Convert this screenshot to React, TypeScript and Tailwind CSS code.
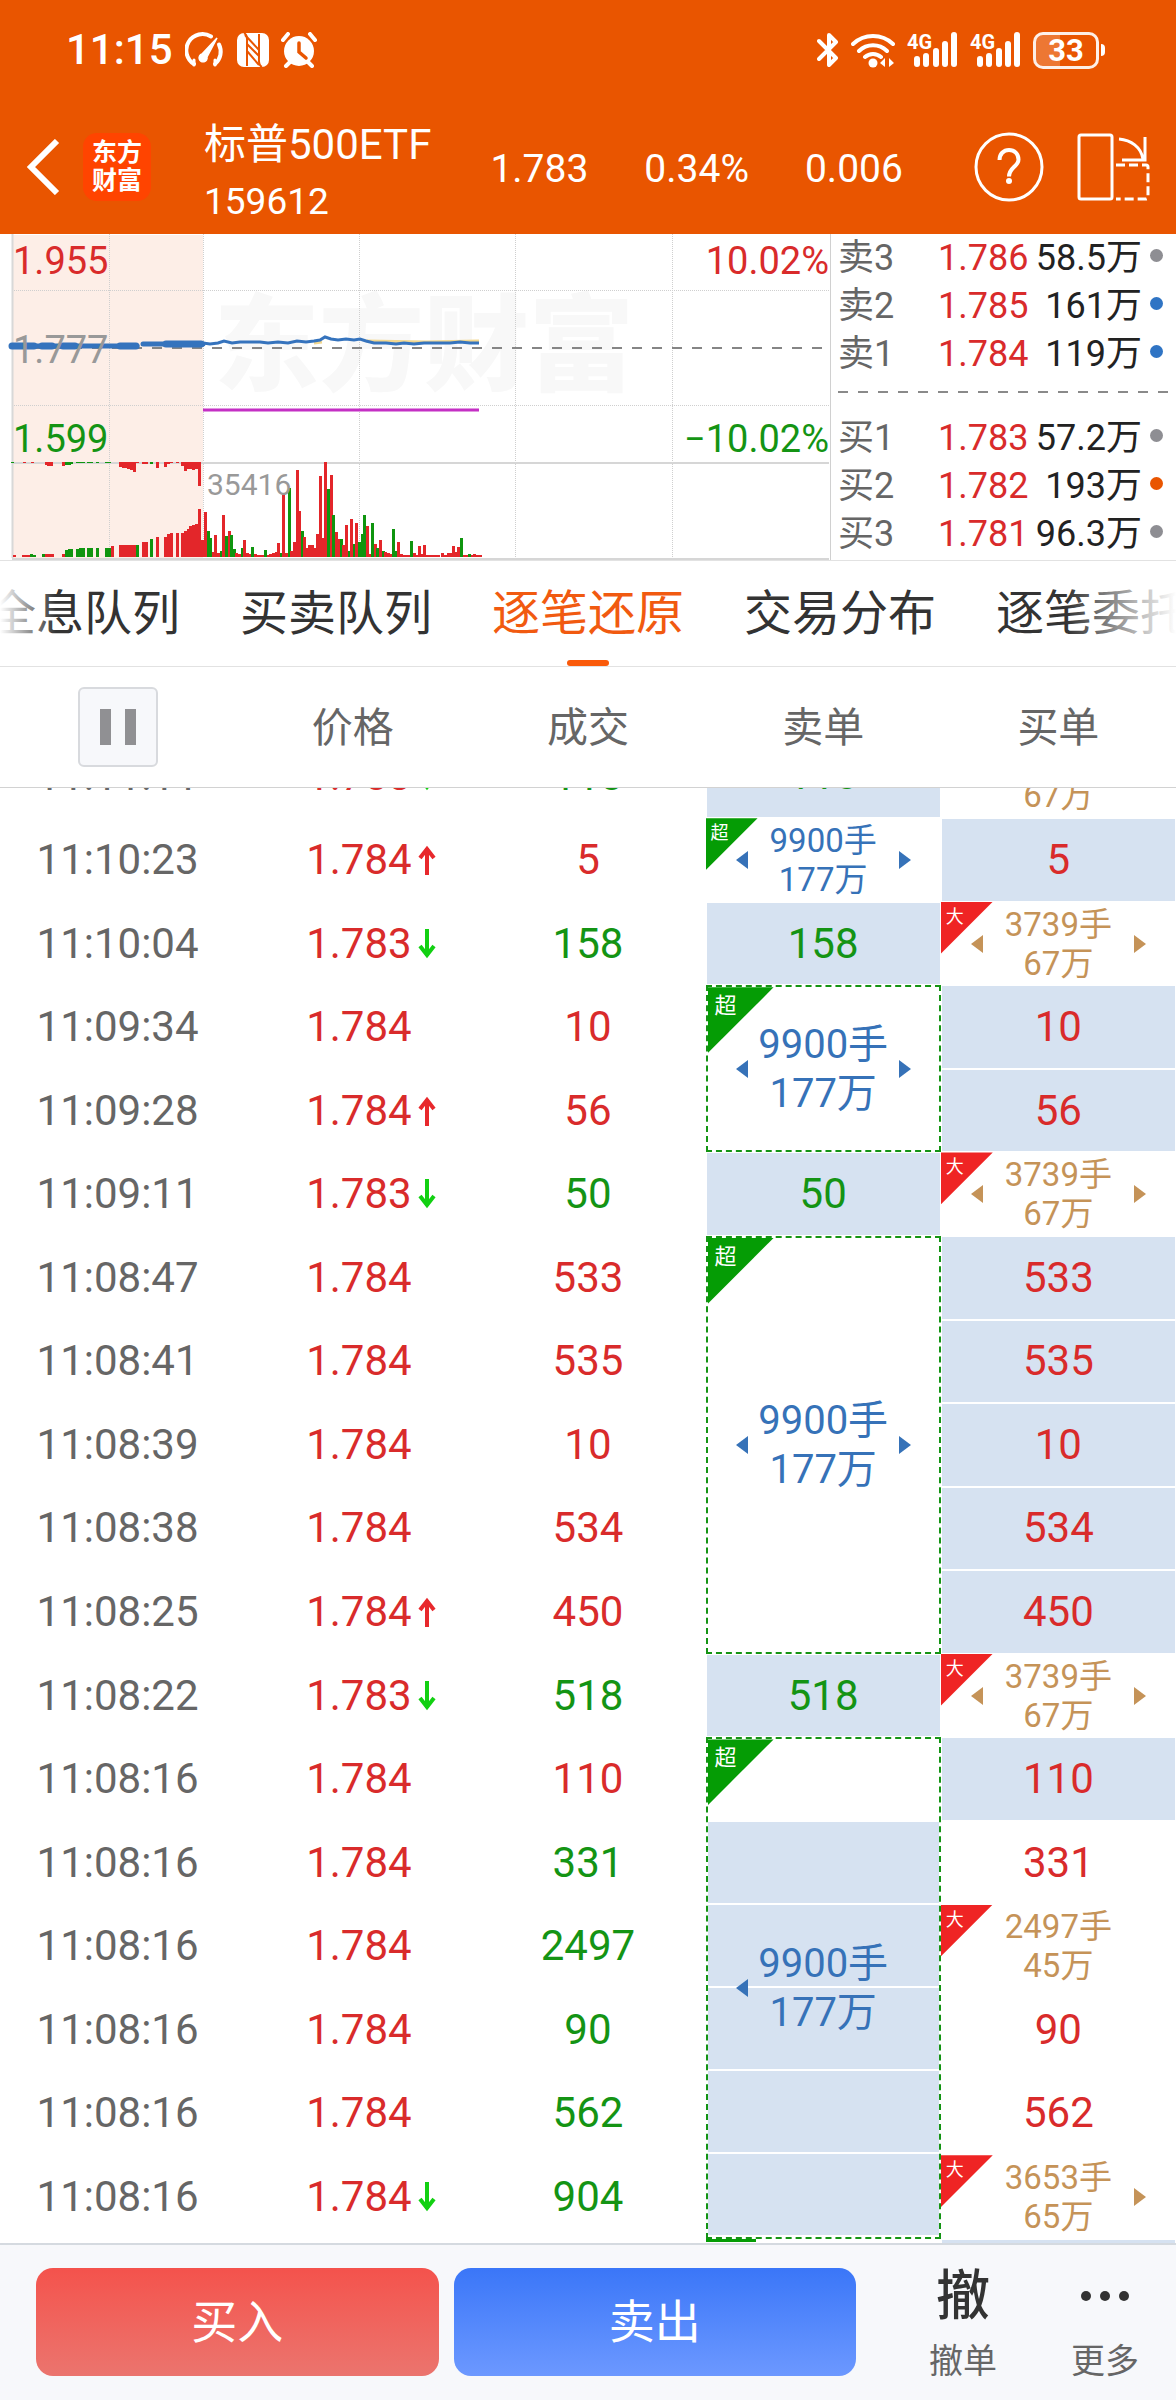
import clsx from "clsx";

type Side = "up" | "down";

type Order = {
  lots: string;
  amount: string;
  span?: number;
  left?: boolean;
  right?: boolean;
  // number of leading rows in the group that stay white
  plainRows?: number;
};

type Tick = {
  time: string;
  price: string;
  move?: Side;
  volume: string;
  side: Side;
  sell?: Order | "match";
  buy: Order | "match" | "plain";
};

const bigSell = (span: number): Order => ({
  lots: "9900手",
  amount: "177万",
  span,
  left: true,
  right: true,
});

const bigBuy: Order = { lots: "3739手", amount: "67万", left: true, right: true };

const ticks: Tick[] = [
  { time: "11:10:23", price: "1.784", move: "up", volume: "5", side: "up", sell: bigSell(1), buy: "match" },
  { time: "11:10:04", price: "1.783", move: "down", volume: "158", side: "down", sell: "match", buy: bigBuy },
  { time: "11:09:34", price: "1.784", volume: "10", side: "up", sell: bigSell(2), buy: "match" },
  { time: "11:09:28", price: "1.784", move: "up", volume: "56", side: "up", buy: "match" },
  { time: "11:09:11", price: "1.783", move: "down", volume: "50", side: "down", sell: "match", buy: bigBuy },
  { time: "11:08:47", price: "1.784", volume: "533", side: "up", sell: bigSell(5), buy: "match" },
  { time: "11:08:41", price: "1.784", volume: "535", side: "up", buy: "match" },
  { time: "11:08:39", price: "1.784", volume: "10", side: "up", buy: "match" },
  { time: "11:08:38", price: "1.784", volume: "534", side: "up", buy: "match" },
  { time: "11:08:25", price: "1.784", move: "up", volume: "450", side: "up", buy: "match" },
  { time: "11:08:22", price: "1.783", move: "down", volume: "518", side: "down", sell: "match", buy: bigBuy },
  {
    time: "11:08:16",
    price: "1.784",
    volume: "110",
    side: "up",
    sell: { lots: "9900手", amount: "177万", span: 6, left: true, plainRows: 1 },
    buy: "match",
  },
  { time: "11:08:16", price: "1.784", volume: "331", side: "down", buy: "plain" },
  { time: "11:08:16", price: "1.784", volume: "2497", side: "down", buy: { lots: "2497手", amount: "45万" } },
  { time: "11:08:16", price: "1.784", volume: "90", side: "down", buy: "plain" },
  { time: "11:08:16", price: "1.784", volume: "562", side: "down", buy: "plain" },
  {
    time: "11:08:16",
    price: "1.784",
    move: "down",
    volume: "904",
    side: "down",
    buy: { lots: "3653手", amount: "65万", right: true },
  },
];

const asks = [
  { label: "卖3", price: "1.786", qty: "58.5万", dot: "bg-[#8e8e93]" },
  { label: "卖2", price: "1.785", qty: "161万", dot: "bg-[#2f74c4]" },
  { label: "卖1", price: "1.784", qty: "119万", dot: "bg-[#2f74c4]" },
];

const bids = [
  { label: "买1", price: "1.783", qty: "57.2万", dot: "bg-[#8e8e93]" },
  { label: "买2", price: "1.782", qty: "193万", dot: "bg-[#e95500]" },
  { label: "买3", price: "1.781", qty: "96.3万", dot: "bg-[#8e8e93]" },
];

const tabs = ["全息队列", "买卖队列", "逐笔还原", "交易分布", "逐笔委托"];

// [x, height], negative height = falling bar
const volumes: [number, number][] = [
  [14, 2], [23, 2], [26, 2], [29, 2], [31, -3], [34, -2], [43, -3], [46, 3], [49, 3], [52, 3], [63, 3],
  [66, -7], [69, -8], [71, -8], [77, -8], [80, -9], [83, -9], [88, -9], [91, -9], [97, -9], [106, -9],
  [109, -9], [112, 11], [120, 12], [123, 12], [125, 12], [128, 12], [131, 12], [134, 12], [137, -12],
  [143, 15], [146, 15], [151, -18], [157, 20], [165, 20], [168, 23], [171, 24], [177, 24], [182, 24],
  [185, 26], [188, 28], [190, 31], [193, 32], [196, 33], [199, 48], [202, 17], [205, 45], [208, -26],
  [210, -19], [213, 5], [215, 22], [218, 4], [221, -6], [223, 42], [226, -21], [229, 26], [231, -22],
  [234, -8], [236, 4], [239, 3], [242, -9], [244, 17], [247, 4], [249, 3], [252, -10], [255, 3], [257, 2],
  [260, 2], [262, 2], [265, -7], [268, 2], [270, 3], [273, 4], [276, 5], [278, 14], [281, -4], [283, 63],
  [286, 4], [289, -69], [291, 6], [294, 15], [297, 87], [299, 46], [302, -26], [304, 20], [307, 9],
  [309, 12], [312, 12], [315, 9], [317, 23], [320, 81], [323, 19], [325, 95], [328, -68], [331, 82],
  [333, -42], [336, 25], [338, 18], [341, -18], [343, 12], [346, 32], [349, -6], [351, 38], [354, -13],
  [356, 34], [359, -15], [362, -23], [364, -42], [367, 31], [370, 3], [372, -34], [375, 13], [377, -9],
  [380, 17], [383, -6], [385, 5], [388, 4], [390, 3], [393, -28], [396, -6], [398, 15], [401, 3], [403, 2],
  [406, 2], [409, 2], [411, -16], [414, 4], [416, 2], [419, 11], [422, 3], [424, 12], [427, 2], [430, 2],
  [432, 2], [435, 2], [438, 2], [442, 4], [445, 2], [448, 4], [450, 4], [453, 11], [456, 5], [458, 10],
  [461, -19], [464, 2], [467, 2], [469, -3], [472, 2], [474, 3], [477, 2], [480, 2],
];

// unmatched volume hanging from the top of the lower pane before the open
const unmatched: [number, number][] = [
  [12, -1], [24, 1], [32, 1], [46, 3], [48, 4], [51, 4], [63, 4], [66, -3], [69, -3], [71, -2], [77, -1],
  [80, -1], [83, -1], [88, -1], [91, -1], [97, -1], [106, -1], [109, -1], [120, 5], [123, 6], [125, 6],
  [128, 7], [131, 8], [134, 10], [137, 1], [143, 2], [146, 2], [151, -2], [157, 6], [165, 5], [168, 2],
  [171, 1], [177, 1], [182, 4], [185, 9], [188, 7], [190, 7], [193, 8], [196, 7], [199, 24],
];

const pricePoints =
  "203,109 210,110 218,109 224,107 232,109 240,108 250,108 260,108 268,109 278,108 288,109 297,107 306,108 314,107 320,106 325,103 331,105 338,106 346,105 354,106 360,105 366,107 374,109 386,109 396,110 404,109 414,110 424,109 440,109 450,109 460,108 470,109 479,109";

function Bars({ data, top }: { data: [number, number][]; top?: boolean }) {
  return (
    <>
      {data.map(([x, h]) => (
        <rect
          key={x}
          x={x - 1}
          y={top ? 228 : 323 - Math.abs(h)}
          width={3}
          height={Math.abs(h)}
          fill={h > 0 ? "#e3262a" : "#0f950f"}
        />
      ))}
    </>
  );
}

function StatusBar() {
  return (
    <div className="flex h-[100px] items-center justify-between pr-[71px] pl-[66px]">
      <div className="flex items-center gap-3">
        <span className="text-[42px] leading-none font-medium">11:15</span>
        <svg width="40" height="36" viewBox="0 0 40 36" fill="none" stroke="white" strokeWidth="4" strokeLinecap="round">
          <path d="M9 32A16 16 0 1 1 26 4.500" />
          <path d="M34 12.500A16 16 0 0 1 30 32" />
          <path d="M9 33v-5M30 33v-5" strokeWidth="3" />
          <path d="M32 6L22 25a4 4 0 1 1-5-3z" fill="white" strokeWidth="1.500" />
        </svg>
        <svg width="32" height="34" viewBox="0 0 32 34">
          <rect width="32" height="34" rx="7" fill="white" />
          <path d="M7 0c4 2 3 6 3 10v23M25 34c-4-2-3-6-3-10V1" fill="none" stroke="#e95500" strokeWidth="2" />
          <path d="M8 2l14 15M10 11l12 12M10 18l12 14" fill="none" stroke="#e95500" strokeWidth="2" />
        </svg>
        <svg width="36" height="36" viewBox="0 0 36 36" fill="none" stroke="white" strokeLinecap="round">
          <circle cx="18" cy="19" r="15" fill="white" stroke="none" />
          <path d="M2 8l5-6M34 8l-5-6M5 34l4-4M31 34l-4-4" strokeWidth="4" />
          <path d="M18 11v9l7 6" stroke="#e95500" strokeWidth="3.500" />
        </svg>
      </div>
      <div className="flex items-center gap-3">
        <svg width="22" height="36" viewBox="0 0 22 36" fill="none" stroke="white" strokeWidth="4" strokeLinejoin="round" strokeLinecap="round">
          <path d="M2 9l17 17-7 7V3l7 7L2 27" />
        </svg>
        <svg width="44" height="36" viewBox="0 0 44 36" fill="none" stroke="white" strokeWidth="4" strokeLinecap="round">
          <path d="M2 12a29 29 0 0 1 40 0M8 19a20 20 0 0 1 28 0M14 25a12 12 0 0 1 16 0" />
          <circle cx="22" cy="31" r="4.500" fill="white" stroke="none" />
          <path d="M34 26v9l-5-4zM38 26v9l5-4z" fill="white" stroke="none" />
        </svg>
        <Signal />
        <Signal />
        <div className="flex items-center gap-[2px]">
          <div className="flex h-[37px] w-[66px] items-center justify-center rounded-[10px] border-3 border-white/90 bg-linear-to-r from-white/20 from-40% to-transparent to-40% text-[31px] leading-none font-bold">
            33
          </div>
          <span className="h-3 w-1 rounded-r bg-white" />
        </div>
      </div>
    </div>
  );
}

function Signal() {
  return (
    <div className="relative h-[36px] w-[51px]">
      <span className="absolute top-0 left-0 text-[20px] leading-[20px] font-bold">4G</span>
      <svg className="h-full w-full" viewBox="0 0 51 36" fill="white">
        <rect x="7" y="24" width="6" height="11" rx="3" />
        <rect x="16" y="21" width="6" height="14" rx="3" />
        <rect x="26" y="16" width="6" height="19" rx="3" />
        <rect x="35" y="9" width="6" height="26" rx="3" />
        <rect x="44" y="0" width="6" height="35" rx="3" />
      </svg>
    </div>
  );
}

function Header() {
  return (
    <header className="h-[234px] shrink-0 bg-[#e95500] text-white">
      <StatusBar />
      <div className="flex h-[134px] items-center pr-[26px] pl-[26px]">
        <button aria-label="返回">
          <svg width="34" height="56" viewBox="0 0 34 56" fill="none" stroke="white" strokeWidth="6">
            <path d="M31 2L5 28l26 26" />
          </svg>
        </button>
        <div className="ml-[23px] flex h-[68px] w-[68px] flex-col items-center justify-center rounded-[14px] bg-[#ff4400] text-[25px] leading-[28px] font-bold">
          <span>东方</span>
          <span>财富</span>
        </div>
        <div className="ml-[53px] flex flex-col pt-[10px]">
          <h1 className="text-[42px] leading-[60px]">标普500ETF</h1>
          <span className="text-[37px] leading-[54px]">159612</span>
        </div>
        <div className="ml-[59px] flex gap-[56px] pt-[4px] text-[39px] leading-none">
          <span>1.783</span>
          <span>0.34%</span>
          <span>0.006</span>
        </div>
        <button aria-label="帮助" className="ml-auto">
          <svg width="70" height="70" viewBox="0 0 70 70" fill="none" stroke="white" strokeWidth="3">
            <circle cx="35" cy="35" r="33" />
            <path d="M25.500 28c0-6 4-10 9.500-10s9.500 4 9.500 9.500c0 7-9.500 8-9.500 17" strokeWidth="4" />
            <circle cx="35" cy="49" r="3" fill="white" stroke="none" />
          </svg>
        </button>
        <button aria-label="横屏" className="ml-[33px]">
          <svg width="73" height="68" viewBox="0 0 73 68" fill="none" stroke="white" strokeWidth="3">
            <rect x="2" y="2" width="33" height="64" rx="2" />
            <path d="M42 6c12 1 22 8 24 20M68 4v23H45" />
            <path d="M39 32h30a2 2 0 0 1 2 2v30a2 2 0 0 1-2 2H39" strokeDasharray="9 4" />
          </svg>
        </button>
      </div>
    </header>
  );
}

function Chart() {
  return (
    <div className="relative h-[326px] min-w-0 flex-1 border-r border-[#d0d0d0] text-[38px] leading-[44px]">
      <div className="absolute top-[48px] left-[214px] text-[105px] leading-[130px] font-black text-[#f8f8f8]">
        东方财富
      </div>
      <svg className="absolute inset-0 h-full w-full" viewBox="0 0 830 326" preserveAspectRatio="none">
        <rect x="12" y="1" width="191" height="323" fill="#fdeee7" />
        <path
          d="M109.500 0v324M203.500 0v324M359.500 0v324M515.500 0v324M672.500 0v324M12 56.500h817M12 171.500h817"
          stroke="#cfcfcf"
          strokeDasharray="1 1"
        />
        <path d="M12.500 0v324" stroke="#d8d8d8" strokeWidth="2" />
        <path d="M12 229h817M12 325h817" stroke="#d6d6d6" strokeWidth="2" />
        <path d="M12 114h817" stroke="#858585" strokeWidth="2" strokeDasharray="10 10" />
        <path d="M314 109l8-1M366 107l60 1 53-1" stroke="#f2d78f" strokeWidth="3" fill="none" />
        <path d="M12 112h125M143 110h60" stroke="#3573bd" strokeWidth="5" strokeLinecap="round" fill="none" />
        <path d="M12 112h22M42 112h10M63 112h12M120 112h16M166 110h35" stroke="#3573bd" strokeWidth="7" strokeLinecap="round" />
        <polyline points={pricePoints} fill="none" stroke="#3573bd" strokeWidth="3" />
        <path d="M203 176h276" stroke="#c42fc4" strokeWidth="3" />
        <Bars data={volumes} />
        <Bars data={unmatched} top />
      </svg>
      <span className="absolute top-[5px] left-[13px] text-[#d92b2b]">1.955</span>
      <span className="absolute top-[94px] left-[13px] text-[#999]">1.777</span>
      <span className="absolute top-[183px] left-[13px] text-[#149414]">1.599</span>
      <span className="absolute top-[5px] right-[1px] text-[#d92b2b]">10.02%</span>
      <span className="absolute top-[183px] right-[1px] text-[#149414]">−10.02%</span>
      <span className="absolute top-[229px] left-[207px] text-[30px] text-[#999]">35416</span>
    </div>
  );
}

function Quotes({ rows }: { rows: typeof asks }) {
  return (
    <ul>
      {rows.map((r) => (
        <li key={r.label} className="flex h-[48px] items-center pr-[13px] pl-[7px] text-[36px] leading-none">
          <span className="w-[100px] text-[#666]">{r.label}</span>
          <span className="text-[#d92b2b]">{r.price}</span>
          <span className="ml-auto text-[#222]">{r.qty}</span>
          <span className={clsx("mb-[5px] ml-[8px] size-[13px] rounded-full", r.dot)} />
        </li>
      ))}
    </ul>
  );
}

function Tabs() {
  return (
    <nav className="relative flex h-[107px] shrink-0 justify-center gap-[60px] overflow-hidden border-y border-[#e2e2e2] text-[48px]">
      {tabs.map((t) => {
        const active = t === "逐笔还原";
        return (
          <button
            key={t}
            className={clsx(
              "flex shrink-0 flex-col items-center justify-end whitespace-nowrap",
              active ? "text-[#f15a10]" : "text-[#333]",
            )}
          >
            <span className="leading-[92px]">{t}</span>
            <span className={clsx("h-[6px] w-[42px] rounded-full", active && "bg-[#fa5a0a]")} />
          </button>
        );
      })}
      <div className="absolute inset-y-0 left-0 w-[56px] bg-linear-to-r from-white to-transparent" />
      <div className="absolute inset-y-0 right-0 w-[110px] bg-linear-to-l from-white to-transparent" />
    </nav>
  );
}

function MoveArrow({ move }: { move: Side }) {
  return (
    <svg width="18" height="30" viewBox="0 0 18 30" fill="none" stroke={move === "up" ? "#e8282c" : "#12d012"} strokeWidth="4">
      <path d={move === "up" ? "M9 30V3M2 13L9 4l7 9" : "M9 0v27M2 17l7 9 7-9"} />
    </svg>
  );
}

function Badge({ text, large, className }: { text: string; large?: boolean; className: string }) {
  return (
    <span
      className={clsx(
        "absolute top-0 left-0 text-left text-white [clip-path:polygon(0_0,100%_0,0_100%)]",
        large ? "size-[66px] pt-[7px] pl-[7px] text-[22px] leading-[24px]" : "size-[52px] pt-[5px] pl-[5px] text-[18px] leading-[20px]",
        className,
      )}
    >
      {text}
    </span>
  );
}

function Pointer({ dir, show }: { dir: "left" | "right"; show?: boolean }) {
  return (
    <svg width="12" height="18" viewBox="0 0 12 18" fill="currentColor">
      {show && <path d={dir === "left" ? "M12 0v18L0 9z" : "M0 0v18l12-9z"} />}
    </svg>
  );
}

function OrderCell({ order, type }: { order: Order; type: "sell" | "buy" }) {
  const span = order.span ?? 1;
  const grouped = span > 1;
  return (
    <td
      rowSpan={span}
      className={clsx(
        "relative p-0",
        type === "sell" ? "text-[#3672b8]" : "text-[#c59358]",
        grouped && "border-2 border-dashed border-[#149414]",
      )}
    >
      {order.plainRows && (
        <div className="absolute inset-0 flex flex-col">
          {Array.from({ length: span }, (_, i) => (
            <div key={i} className={clsx("flex-1 border-b-2 border-white", i >= order.plainRows! && "bg-[#d6e2f1]")} />
          ))}
        </div>
      )}
      <Badge
        text={type === "sell" ? "超" : "大"}
        large={grouped}
        className={type === "sell" ? "bg-[#059c05]" : "bg-[#ef2424]"}
      />
      <div className={clsx("relative flex items-center justify-between", grouped ? "px-[28px]" : "px-[30px]")}>
        <Pointer dir="left" show={order.left} />
        <div
          className={clsx(
            "flex flex-col text-center whitespace-nowrap",
            grouped ? "text-[40px] leading-[49px]" : "text-[33px] leading-[39px]",
          )}
        >
          <span>{order.lots}</span>
          <span>{order.amount}</span>
        </div>
        <Pointer dir="right" show={order.right} />
      </div>
    </td>
  );
}

function TickTable() {
  const color = (s: Side) => (s === "up" ? "text-[#d92b2b]" : "text-[#149414]");
  return (
    <table className="h-full w-full table-fixed border-separate border-spacing-0 text-center text-[42px] leading-none">
      <thead>
        <tr className="h-[121px] text-[41px] text-[#666]">
          <th className="border-b border-[#d2d2d2] p-0">
            <button
              aria-label="暂停"
              className="inline-flex h-[80px] w-[80px] items-center justify-center gap-[14px] rounded-[6px] border-2 border-[#d8dade] bg-[#f7f8fb] align-middle"
            >
              <span className="h-[36px] w-[11px] bg-[#909093]" />
              <span className="h-[36px] w-[11px] bg-[#909093]" />
            </button>
          </th>
          {["价格", "成交", "卖单", "买单"].map((h) => (
            <th key={h} className="border-b border-[#d2d2d2] p-0 pt-[2px] font-normal">
              {h}
            </th>
          ))}
        </tr>
      </thead>
      <tbody>
        {/* row scrolled most of the way under the header */}
        <tr className="h-[30px]">
          <td className="p-0 text-[#666]">
            <div className="flex h-[30px] flex-col justify-end overflow-hidden">
              <span className="leading-[84px]">11:11:11</span>
            </div>
          </td>
          <td className="p-0 text-[#d92b2b]">
            <div className="flex h-[30px] items-end overflow-hidden pl-[71px]">
              <div className="flex h-[84px] shrink-0 items-center gap-[6px]">
                1.783
                <MoveArrow move="down" />
              </div>
            </div>
          </td>
          <td className="p-0 text-[#149414]">
            <div className="flex h-[30px] flex-col justify-end overflow-hidden">
              <span className="leading-[84px]">118</span>
            </div>
          </td>
          <td className="border border-t-0 border-white bg-[#d6e2f1] bg-clip-padding p-0 text-[#149414]">
            <div className="flex h-[29px] flex-col justify-end overflow-hidden">
              <span className="leading-[84px]">118</span>
            </div>
          </td>
          <td className="p-0 text-[#c59358]">
            <div className="flex h-[30px] flex-col justify-end overflow-hidden pb-[3px] text-[33px] leading-[39px]">
              <span>67万</span>
            </div>
          </td>
        </tr>
        {ticks.map((t, i) => (
          <tr key={i} className="h-[83px]">
            <td className="p-0 text-[#666]">{t.time}</td>
            <td className="p-0 text-[#d92b2b]">
              <div className="flex items-center gap-[6px] pl-[71px]">
                {t.price}
                {t.move && <MoveArrow move={t.move} />}
              </div>
            </td>
            <td className={clsx("p-0", color(t.side))}>{t.volume}</td>
            {t.sell === "match" && (
              <td className="border border-white bg-[#d6e2f1] bg-clip-padding p-0 text-[#149414]">{t.volume}</td>
            )}
            {t.sell && t.sell !== "match" && <OrderCell order={t.sell} type="sell" />}
            {typeof t.buy === "string" ? (
              <td
                className={clsx(
                  "border border-white bg-clip-padding p-0 text-[#d92b2b]",
                  t.buy === "match" && "bg-[#d6e2f1]",
                )}
              >
                {t.volume}
              </td>
            ) : (
              <OrderCell order={t.buy} type="buy" />
            )}
          </tr>
        ))}
        <tr className="h-[4px]">
          <td colSpan={3} className="p-0" />
          <td className="p-0">
            <div className="h-[3px] w-[50px] bg-[#059c05]" />
          </td>
          <td className="border border-b-0 border-white bg-[#d6e2f1] bg-clip-padding p-0" />
        </tr>
      </tbody>
    </table>
  );
}

function Footer() {
  return (
    <footer className="flex h-[157px] shrink-0 border-t-2 border-[#d5dae0] bg-[#f7f8fb] pt-[23px] pl-[36px]">
      <div className="flex flex-1 gap-[15px] text-[46px] text-white">
        <button className="h-[108px] flex-1 rounded-[17px] bg-linear-to-b from-[#f4524c] to-[#eb746e]">买入</button>
        <button className="h-[108px] flex-1 rounded-[17px] bg-linear-to-b from-[#3a76f8] to-[#6c98ff]">卖出</button>
      </div>
      <div className="ml-[36px] flex text-[34px] leading-[40px] text-[#666]">
        <button className="flex w-[142px] flex-col items-center">
          <span className="h-[73px] text-[54px] leading-[58px] font-medium text-[#333]">撤</span>
          <span>撤单</span>
        </button>
        <button className="flex w-[142px] flex-col items-center">
          <span className="flex h-[73px] gap-[9px] pt-[23px]">
            <i className="size-[10px] rounded-full bg-[#333]" />
            <i className="size-[10px] rounded-full bg-[#333]" />
            <i className="size-[10px] rounded-full bg-[#333]" />
          </span>
          <span>更多</span>
        </button>
      </div>
    </footer>
  );
}

export default function App() {
  return (
    <div className="flex h-screen flex-col overflow-hidden bg-white font-[Roboto,'Noto_Sans_CJK_SC',sans-serif]">
      <Header />
      <section className="flex shrink-0">
        <Chart />
        <div className="w-[345px]">
          <Quotes rows={asks} />
          <svg className="my-[12px] h-[12px] w-full" viewBox="0 0 345 12" preserveAspectRatio="none">
            <path d="M7 2h331" stroke="#8a8a8a" strokeWidth="2" strokeDasharray="10 10" />
          </svg>
          <Quotes rows={bids} />
        </div>
      </section>
      <Tabs />
      <main className="min-h-0 flex-1">
        <TickTable />
      </main>
      <Footer />
    </div>
  );
}
